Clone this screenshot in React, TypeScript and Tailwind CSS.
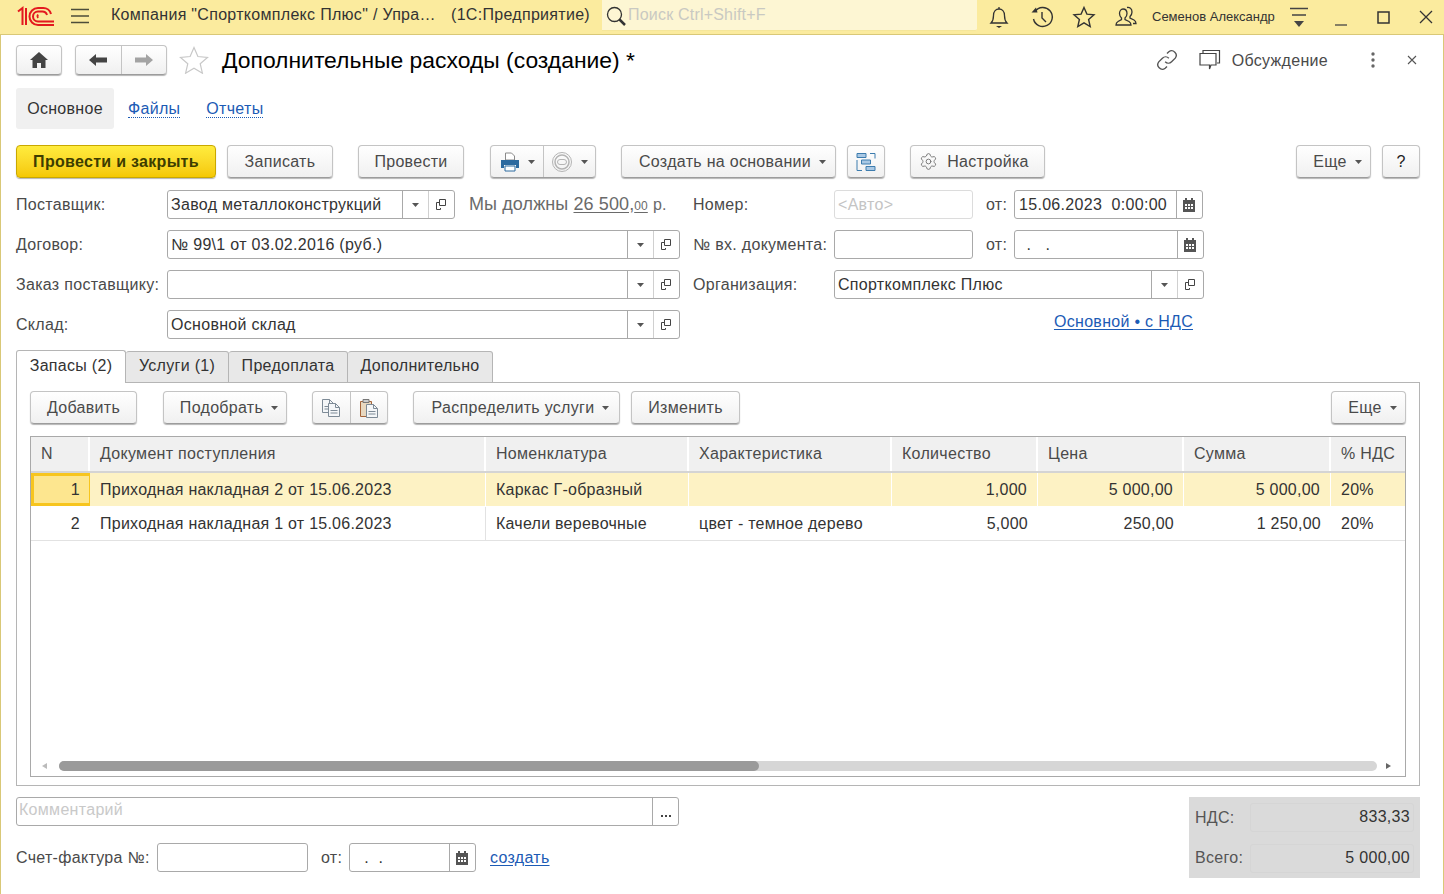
import React from 'react';
import { Settings } from 'lucide-react';

const Caret = ({ className = 'ml-2' }: { className?: string }) => (
  <svg width="7" height="4" viewBox="0 0 7 4" className={className}>
    <path d="M0 0h7L3.5 4z" fill="#555" />
  </svg>
);

const BTN =
  'flex items-center justify-center h-[33px] rounded-[4px] border border-[#c4c4c4] border-b-[#9c9c9c] bg-gradient-to-b from-white to-[#f0f0f0] shadow-[0_1px_1px_#b5b5b5] text-[#4a4a4a] shrink-0';

const Btn = ({ w, caret, children, className = '' }: { w: string; caret?: boolean; children: React.ReactNode; className?: string }) => (
  <div className={`${BTN} ${w} ${caret ? 'pl-[8px]' : ''} ${className}`}>
    {children}
    {caret && <Caret />}
  </div>
);

const CopyIcon = () => (
  <svg width="12" height="13" viewBox="0 0 12 13" fill="none" stroke="#444" strokeWidth="1" className="mr-[2px]">
    <path d="M4.500 1.500h6v6h-6z" />
    <path d="M4.500 4.500H1.500v7h4V10" />
  </svg>
);

const CalendarIcon = () => (
  <svg width="12" height="14" viewBox="0 0 12 14" className="mr-[2px]">
    <path d="M0 2h2V0h2v2h4V0h2v2h2v12H0z" fill="#555" />
    <g fill="#fff">
      <rect x="2" y="6" width="2" height="2" />
      <rect x="5" y="6" width="2" height="2" />
      <rect x="8" y="6" width="2" height="2" />
      <rect x="2" y="9" width="2" height="2" />
      <rect x="5" y="9" width="2" height="2" />
      <rect x="8" y="9" width="2" height="2" />
    </g>
  </svg>
);

const FIELD = 'flex items-center h-[29px] rounded-[3px] border border-[#a9a9a9] bg-white text-[#333] shrink-0';

const Select = ({ w, value }: { w: string; value?: string }) => (
  <div className={`${FIELD} ${w}`}>
    <span className="flex-1 pl-[3px] whitespace-nowrap overflow-hidden">{value}</span>
    <span className="w-[26px] h-full border-l border-[#a9a9a9] flex items-center justify-center">
      <Caret className="" />
    </span>
    <span className="w-[26px] h-full border-l border-[#d0d0d0] flex items-center justify-center">
      <CopyIcon />
    </span>
  </div>
);

const DateField = ({ w, value }: { w: string; value: React.ReactNode }) => (
  <div className={`${FIELD} ${w}`}>
    <span className="flex-1 pl-1 whitespace-pre">{value}</span>
    <span className="w-[26px] h-full border-l border-[#a9a9a9] flex items-center justify-center">
      <CalendarIcon />
    </span>
  </div>
);

const Label = ({ w, children }: { w: string; children: React.ReactNode }) => (
  <span className={`${w} text-[#4a4a4a] whitespace-nowrap shrink-0`}>{children}</span>
);

const Link = ({ children, dotted }: { children: React.ReactNode; dotted?: boolean }) => (
  <span className={`text-[#1c5bb5] ${dotted ? 'border-b border-dotted border-[#1c5bb5] leading-[18px]' : 'underline underline-offset-2'}`}>
    {children}
  </span>
);

const DocIcon = ({ x, y }: { x: number; y: number }) => (
  <g transform={`translate(${x} ${y})`} fill="#f4f6f8" stroke="#7d8a96" strokeWidth="1">
    <path d="M.5.5h7l4 4v9H.5z" />
    <path d="M7.500.5v4h4M2.500 7.500h7M2.500 10h7" fill="none" />
  </g>
);

const columns = [
  { title: 'N', w: 'w-[59px]' },
  { title: 'Документ поступления', w: 'w-[396px]' },
  { title: 'Номенклатура', w: 'w-[203px]' },
  { title: 'Характеристика', w: 'w-[203px]' },
  { title: 'Количество', w: 'w-[146px]' },
  { title: 'Цена', w: 'w-[146px]' },
  { title: 'Сумма', w: 'w-[147px]' },
  { title: '% НДС', w: 'flex-1' },
];

const rows = [
  ['1', 'Приходная накладная 2 от 15.06.2023', 'Каркас Г-образный', '', '1,000', '5 000,00', '5 000,00', '20%'],
  ['2', 'Приходная накладная 1 от 15.06.2023', 'Качели веревочные', 'цвет - темное дерево', '5,000', '250,00', '1 250,00', '20%'],
];

const RIGHT_ALIGNED = [0, 4, 5, 6];

const HeaderIcons = () => (
  <div className="flex items-center h-[34px] text-[#333]">
    <svg width="24" height="24" viewBox="0 0 24 24" fill="none" stroke="#333" strokeWidth="1.3" className="ml-[10px]">
      <path d="M4 18c2-2 2.500-4 2.500-7.500C6.500 6.500 9 4 12 4s5.500 2.500 5.500 6.500c0 3.500.5 5.500 2.500 7.500z" />
      <path d="M12 2v2" />
      <path d="M9 21h6l-3 2z" fill="#333" stroke="none" />
    </svg>
    <svg width="24" height="24" viewBox="0 0 24 24" fill="none" stroke="#333" strokeWidth="1.4" className="ml-[19px]">
      <path d="M5 6.500A9.500 9.500 0 1 1 3.500 14" />
      <path d="M1.500 7.500h6l-1.500-5z" fill="#333" stroke="none" />
      <path d="M12 7v6l4 4" />
    </svg>
    <svg width="24" height="24" viewBox="0 0 24 24" fill="none" stroke="#333" strokeWidth="1.4" className="ml-[18px]">
      <path d="M12 2.500l2.900 6.600 7.100.7-5.400 4.700 1.600 7-6.200-3.700-6.200 3.700 1.600-7L2 9.800l7.100-.7z" />
    </svg>
    <svg width="24" height="24" viewBox="0 0 24 24" fill="none" stroke="#333" strokeWidth="1.3" className="ml-[18px]">
      <path d="M9 4c2.500 0 4 2 4 4.500 0 2-1 3.500-2 4.500v1.500l4 2c1.500.8 2 1.500 2 3.500H2c0-2 .5-2.700 2-3.500l3.500-2V13c-1-1-2-2.500-2-4.500C5.500 6 7 4 9 4z" />
      <path d="M13 2.500c2.500-.5 5 1 5 4.500 0 2-1 3.500-2 4.500V13l4 2c1.500.8 2 1.500 2 3.500h-3" />
    </svg>
    <span className="ml-[14px] text-[13px] tracking-normal text-[#333] whitespace-nowrap">Семенов Александр</span>
    <svg width="20" height="22" viewBox="0 0 20 22" fill="none" stroke="#444" strokeWidth="1.3" className="ml-[14px]">
      <path d="M1 2.500h18M3 9h14" />
      <path d="M5 15h10l-5 6z" fill="#444" stroke="none" />
    </svg>
    <svg width="14" height="14" viewBox="0 0 14 14" stroke="#444" strokeWidth="1.3" className="ml-[25px] mt-[4px]">
      <path d="M1 13h12" />
    </svg>
    <svg width="13" height="13" viewBox="0 0 13 13" fill="none" stroke="#333" strokeWidth="1.5" className="ml-[29px]">
      <path d="M1 1h11v11H1z" />
    </svg>
    <svg width="14" height="14" viewBox="0 0 14 14" stroke="#333" strokeWidth="1.3" className="ml-[29px]">
      <path d="M1 1l12 12M13 1L1 13" />
    </svg>
  </div>
);

export default function App() {
  return (
    <div className="w-[1444px] h-[894px] overflow-hidden bg-white text-[16px] leading-[20px] tracking-[0.3px] font-['Liberation_Sans',Arial,sans-serif] flex flex-col">
      {/* top bar */}
      <header className="h-[35px] shrink-0 bg-[#fbeb9e] border-b border-[#d9c877] flex items-start">
        <svg width="40" height="24" viewBox="0 0 40 24" fill="none" stroke="#e3191f" strokeWidth="2" className="ml-[17px] mt-[5px] shrink-0">
          <path d="M1 6.500L5.500 3V20M9 3V20" />
          <path d="M37 20H21a8.500 8.500 0 0 1 0-17h5a8 8 0 0 1 8 6" />
          <path d="M37 16.500H21a5 5 0 0 1 0-10h4a5 5 0 0 1 5 3.500" />
          <path d="M21 13a3 3 0 0 1 0-3.500" />
        </svg>
        <svg width="20" height="16" viewBox="0 0 20 16" stroke="#4d4d3a" strokeWidth="1.5" className="ml-[13px] mt-[8px] shrink-0">
          <path d="M1 1.500h18M1 8h18M1 14.500h18" />
        </svg>
        <div className="ml-[21px] mt-[5px] w-[479px] flex justify-between whitespace-nowrap text-[#333]">
          <span>Компания "Спорткомплекс Плюс" / Упра…</span>
          <span>(1С:Предприятие)</span>
        </div>
        <div className="ml-[12px] w-[375px] h-[31px] bg-[#fdf6d3] flex items-start rounded-br-[2px] shrink-0 border-b border-[#f5e69a]">
          <svg width="22" height="22" viewBox="0 0 22 22" fill="none" stroke="#333" className="ml-[3px] mt-[5px] shrink-0">
            <circle cx="9.500" cy="9.500" r="7" strokeWidth="1.300" />
            <path d="M14.500 14.500L20 20" strokeWidth="2.500" />
          </svg>
          <span className="ml-[1px] mt-[5px] text-[#c9c9c2] whitespace-nowrap tracking-[0.2px]">Поиск Ctrl+Shift+F</span>
        </div>
        <HeaderIcons />
      </header>

      <main className="flex-1 border-l border-r border-[#d9c877] pl-[15px] pr-[23px] min-h-0">
        {/* title row */}
        <div className="mt-[10px] h-[30px] flex items-center">
          <Btn w="w-[46px]" className="!h-[30px]">
            <svg width="18" height="16" viewBox="0 0 18 16">
              <path d="M9 0L18 8h-2.500v8H11v-5H7v5H2.500V8H0z" fill="#444" />
            </svg>
          </Btn>
          <div className={`${BTN} !h-[30px] w-[92px] ml-[13px]`}>
            <span className="flex-1 h-full flex items-center justify-center border-r border-[#c4c4c4]">
              <svg width="18" height="12" viewBox="0 0 18 12"><path d="M0 6l7-6v3.500h11v5H7V12z" fill="#444" /></svg>
            </span>
            <span className="flex-1 h-full flex items-center justify-center">
              <svg width="18" height="12" viewBox="0 0 18 12"><path d="M18 6l-7-6v3.500H0v5h11V12z" fill="#a3a3a3" /></svg>
            </span>
          </div>
          <svg width="30" height="28" viewBox="0 0 30 28" fill="none" stroke="#c8c8c8" strokeWidth="1.200" className="ml-[12px]">
            <path d="M15 1.500l3.900 9 9.600.9-7.300 6.300 2.200 9.500-8.400-5-8.400 5 2.200-9.500L1.500 11.400l9.600-.9z" />
          </svg>
          <h1 className="ml-[13px] text-[22.9px] leading-[30px] tracking-normal font-normal text-black whitespace-nowrap">Дополнительные расходы (создание) *</h1>
          <svg width="22" height="22" viewBox="0 0 24 24" fill="none" stroke="#555" strokeWidth="1.500" className="ml-auto">
            <path d="M10 14a5 5 0 0 0 7 0l4-4a5 5 0 0 0-7-7l-2 2" />
            <path d="M14 10a5 5 0 0 0-7 0l-4 4a5 5 0 0 0 7 7l2-2" />
          </svg>
          <svg width="22" height="22" viewBox="0 0 22 22" fill="none" stroke="#444" strokeWidth="1.200" className="ml-[21px]">
            <path d="M4 4V1.500h16.500V14H18" />
            <path d="M1 4.500h16V16H12l-1.500 4V16H1z" />
          </svg>
          <span className="ml-[11px] mt-[2px] text-[#4a4a4a] whitespace-nowrap">Обсуждение</span>
          <svg width="4" height="16" viewBox="0 0 4 16" fill="#666" className="ml-[43px]">
            <circle cx="2" cy="2" r="1.700" />
            <circle cx="2" cy="8" r="1.700" />
            <circle cx="2" cy="14" r="1.700" />
          </svg>
          <svg width="10" height="10" viewBox="0 0 10 10" stroke="#555" strokeWidth="1.100" className="ml-[32px] mr-[3px]">
            <path d="M1 1l8 8M9 1L1 9" />
          </svg>
        </div>

        {/* form sections */}
        <nav className="mt-[13px] h-[41px] flex items-center">
          <span className="w-[98px] h-full bg-[#f0f0f0] rounded-[3px] flex items-center justify-center text-[#333]">Основное</span>
          <span className="ml-[14px]"><Link dotted>Файлы</Link></span>
          <span className="ml-[26px]"><Link dotted>Отчеты</Link></span>
        </nav>

        {/* command bar */}
        <div className="mt-[16px] flex items-center">
          <Btn w="w-[200px]" className="!border-[#c9a800] !from-[#ffec3d] !to-[#f5c800] !text-[#3d3d00] font-bold">Провести и закрыть</Btn>
          <Btn w="w-[106px]" className="ml-[11px]">Записать</Btn>
          <Btn w="w-[106px]" className="ml-[25px]">Провести</Btn>
          <div className={`${BTN} w-[106px] ml-[26px]`}>
            <span className="w-[53px] h-full flex items-center justify-center border-r border-[#c4c4c4]">
              <svg width="20" height="20" viewBox="0 0 20 20">
                <path d="M5.500 1h6l3 3v4h-9z" fill="#fff" stroke="#8a8a8a" />
                <path d="M1 8h18v8h-3v-3H4v3H1z" fill="#2d6a9f" />
                <path d="M5 14h10v5H5z" fill="#fff" stroke="#2d6a9f" />
              </svg>
              <Caret className="ml-[8px]" />
            </span>
            <span className="flex-1 h-full flex items-center justify-center">
              <svg width="22" height="22" viewBox="0 0 22 22" fill="none" stroke="#b4b4b4">
                <circle cx="11" cy="11" r="9.500" />
                <circle cx="11" cy="11" r="7" strokeWidth="1.500" />
                <rect x="6.500" y="8.500" width="9" height="5" rx="2.500" />
              </svg>
              <Caret className="ml-[8px]" />
            </span>
          </div>
          <Btn w="w-[215px]" caret className="ml-[25px]">Создать на основании</Btn>
          <Btn w="w-[38px]" className="ml-[11px]">
            <svg width="20" height="20" viewBox="0 0 20 20" fill="#a9c8e4" stroke="#3d7cae">
              <path d="M1 1.500h9v4H1zM5.500 8h9v4h-9zM10 14.500h9v4h-9z" />
              <path d="M14 1.500h5v5M1 8v10.500h5" fill="none" />
            </svg>
          </Btn>
          <Btn w="w-[135px]" className="ml-[25px] pr-[7px]">
            <Settings size={19} strokeWidth={1.2} color="#777" className="mr-[9px]" />
            Настройка
          </Btn>
          <Btn w="w-[75px]" caret className="ml-auto">Еще</Btn>
          <Btn w="w-[38px]" className="ml-[11px] !text-[#222]">?</Btn>
        </div>

        {/* requisites */}
        <section className="mt-[12px] flex">
          <div className="w-[664px] shrink-0 flex flex-col gap-[11px]">
            <div className="flex items-center">
              <Label w="w-[151px]">Поставщик:</Label>
              <Select w="w-[288px]" value="Завод металлоконструкций" />
              <span className="ml-[14px] text-[18px] tracking-[0.1px] text-[#6a6a6a] whitespace-nowrap">
                Мы должны <span className="underline underline-offset-2">26 500,<span className="text-[12px]">00</span></span> <span className="text-[16px]">р.</span>
              </span>
            </div>
            <div className="flex items-center">
              <Label w="w-[151px]">Договор:</Label>
              <Select w="w-[513px]" value="№ 99\1 от 03.02.2016 (руб.)" />
            </div>
            <div className="flex items-center">
              <Label w="w-[151px]">Заказ поставщику:</Label>
              <Select w="w-[513px]" />
            </div>
            <div className="flex items-center">
              <Label w="w-[151px]">Склад:</Label>
              <Select w="w-[513px]" value="Основной склад" />
            </div>
          </div>
          <div className="ml-[13px] flex flex-col gap-[11px]">
            <div className="flex items-center">
              <Label w="w-[141px]">Номер:</Label>
              <div className={`${FIELD} w-[139px] !border-[#dcdcdc] !text-[#c4c4c4] pl-[3px]`}>&lt;Авто&gt;</div>
              <Label w="w-[41px] pl-[13px]">от:</Label>
              <DateField w="w-[189px]" value="15.06.2023  0:00:00" />
            </div>
            <div className="flex items-center">
              <Label w="w-[141px]">№ вх. документа:</Label>
              <div className={`${FIELD} w-[139px]`} />
              <Label w="w-[41px] pl-[13px]">от:</Label>
              <DateField w="w-[190px]" value={<span className="-ml-[2px]">{'  .   .'}</span>} />
            </div>
            <div className="flex items-center">
              <Label w="w-[141px]">Организация:</Label>
              <Select w="w-[370px]" value="Спорткомплекс Плюс" />
            </div>
            <div className="h-[24px] w-[500px] flex justify-end items-start mt-[2px]">
              <Link>Основной • с НДС</Link>
            </div>
          </div>
        </section>

        {/* tabs */}
        <div className="mt-[11px] h-[33px] flex items-end relative z-10">
          <span className="w-[110px] h-[33px] pb-[2px] bg-white border border-b-0 border-[#b5b5b5] rounded-t-[3px] flex items-center justify-center text-[#333] whitespace-nowrap">Запасы (2)</span>
          <span className="w-[103px] h-[32px] pb-[2px] bg-[#e8e8e8] border border-l-0 border-[#b5b5b5] rounded-t-[3px] flex items-center justify-center text-[#333] whitespace-nowrap">Услуги (1)</span>
          <span className="w-[119px] h-[32px] pb-[2px] bg-[#e8e8e8] border border-l-0 border-[#b5b5b5] rounded-t-[3px] flex items-center justify-center text-[#333] whitespace-nowrap">Предоплата</span>
          <span className="w-[145px] h-[32px] pb-[2px] bg-[#e8e8e8] border border-l-0 border-[#b5b5b5] rounded-t-[3px] flex items-center justify-center text-[#333] whitespace-nowrap">Дополнительно</span>
        </div>

        {/* tab panel */}
        <div className="-mt-px h-[404px] border border-[#b5b5b5] px-[13px] pt-[8px]">
          <div className="flex items-center">
            <Btn w="w-[107px]">Добавить</Btn>
            <Btn w="w-[124px]" caret className="ml-[26px]">Подобрать</Btn>
            <div className={`${BTN} w-[76px] ml-[25px]`}>
              <span className="flex-1 h-full flex items-center justify-center border-r border-[#c4c4c4]">
                <svg width="20" height="20" viewBox="0 0 20 20">
                  <DocIcon x={1} y={1} />
                  <DocIcon x={7} y={5} />
                </svg>
              </span>
              <span className="flex-1 h-full flex items-center justify-center">
                <svg width="20" height="20" viewBox="0 0 20 20">
                  <path d="M1.500 3.500h11v15h-11z" fill="#e8d8c0" stroke="#a5643a" />
                  <path d="M4 1.500h6v3H4z" fill="#ccc" stroke="#777" />
                  <DocIcon x={7} y={6} />
                </svg>
              </span>
            </div>
            <Btn w="w-[207px]" caret className="ml-[25px]">Распределить услуги</Btn>
            <Btn w="w-[109px]" className="ml-[11px]">Изменить</Btn>
            <Btn w="w-[75px]" caret className="ml-auto">Еще</Btn>
          </div>

          {/* table */}
          <div className="mt-[12px] h-[341px] border border-[#a9a9a9] flex flex-col">
            <div className="h-[36px] bg-[#f0f0f0] border-b-2 border-[#d4d4d4] flex text-[#4a4a4a] shrink-0">
              {columns.map((c, i) => (
                <div key={c.title} className={`${c.w} h-full pl-[10px] flex items-center whitespace-nowrap shrink-0 ${i < columns.length - 1 ? 'border-r-2 border-white' : ''}`}>
                  {c.title}
                </div>
              ))}
            </div>
            {rows.map((row, r) => (
              <div key={row[0]} className={`h-[34px] flex shrink-0 text-[#333] tracking-[0.25px] ${r === 0 ? 'bg-[#fdf2c4] border-b border-white' : 'border-b border-[#e2e2e2]'}`}>
                {row.map((cell, i) => (
                  <div
                    key={i}
                    className={`${columns[i].w} h-full flex items-center whitespace-nowrap shrink-0 px-[10px] ${RIGHT_ALIGNED.includes(i) ? 'justify-end' : ''} ${i < row.length - 1 ? (r === 0 ? 'border-r border-white' : i === 1 ? 'border-r border-[#e2e2e2]' : '') : ''} ${r === 0 && i === 0 ? 'bg-[#fde68f] border-[3px] !border-[#f7c51e] !pr-[9px]' : ''}`}
                  >
                    {cell}
                  </div>
                ))}
              </div>
            ))}
            {/* scrollbar */}
            <div className="mt-auto mb-[5px] h-[10px] flex items-center pl-[11px] pr-[13px]">
              <svg width="6" height="6" viewBox="0 0 6 6" className="shrink-0"><path d="M5 0v6L0 3z" fill="#bbb" /></svg>
              <div className="ml-[11px] w-[1318px] h-[10px] rounded-full bg-[#d6d6d6] shrink-0">
                <div className="w-[700px] h-full rounded-full bg-[#9a9a9a]" />
              </div>
              <svg width="6" height="6" viewBox="0 0 6 6" className="ml-auto shrink-0"><path d="M0 0v6l5-3z" fill="#666" /></svg>
            </div>
          </div>
        </div>

        {/* footer */}
        <footer className="mt-[11px] flex items-start">
          <div className="w-[663px] shrink-0">
            <div className={`${FIELD} w-[663px]`}>
              <span className="flex-1 pl-[2px] pb-[3px] text-[#c9c9c9]">Комментарий</span>
              <span className="w-[26px] h-full border-l border-[#a9a9a9] flex items-end justify-center pb-[8px]">
                <svg width="10" height="2" viewBox="0 0 10 2" fill="#444">
                  <rect width="2" height="2" />
                  <rect x="4" width="2" height="2" />
                  <rect x="8" width="2" height="2" />
                </svg>
              </span>
            </div>
            <div className="mt-[17px] flex items-center">
              <Label w="w-[141px]">Счет-фактура №:</Label>
              <div className={`${FIELD} w-[151px]`} />
              <Label w="w-[41px] pl-[13px]">от:</Label>
              <DateField w="w-[127px]" value={<span className="-ml-[4px]">{'   .  .'}</span>} />
              <span className="ml-[14px]"><Link>создать</Link></span>
            </div>
          </div>
          <div className="ml-auto w-[231px] h-[81px] bg-[#dadada] px-[6px] flex flex-col justify-center gap-[12px] text-[#555]">
            <div className="flex items-center">
              <span className="w-[55px] mt-[1px]">НДС:</span>
              <span className="flex-1 h-[29px] border border-[#d5d5d5] rounded-[3px] flex items-center justify-end pr-[3px] text-[#333]">833,33</span>
            </div>
            <div className="flex items-center">
              <span className="w-[55px]">Всего:</span>
              <span className="flex-1 h-[29px] border border-[#d5d5d5] rounded-[3px] flex items-center justify-end pr-[3px] text-[#333]">5 000,00</span>
            </div>
          </div>
        </footer>
      </main>
    </div>
  );
}
